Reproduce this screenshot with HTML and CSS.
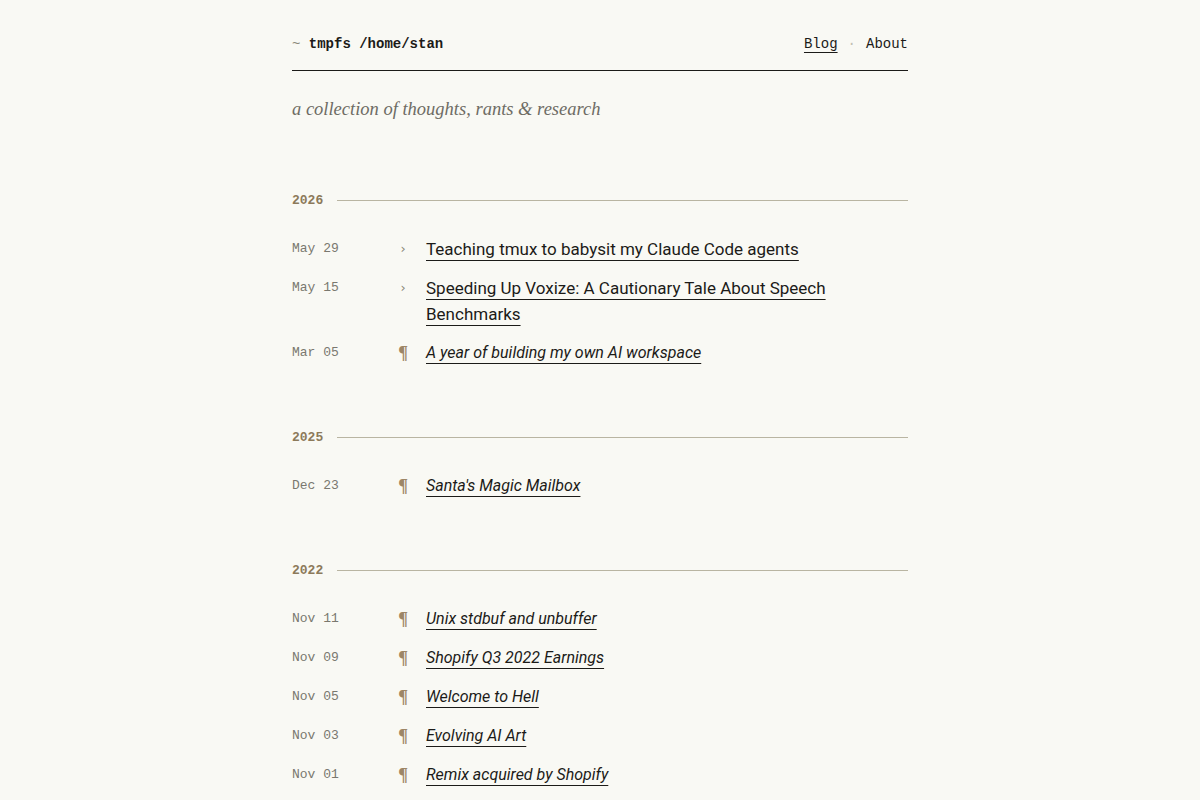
FILE: index.html
```html
<!DOCTYPE html>
<html lang="en">
<head>
    <meta charset="UTF-8">
    <meta name="viewport" content="width=device-width, initial-scale=1.0">
    <title>tmpfs /home/stan</title>
    <link rel="stylesheet" href="styles.css">
</head>
<body>
    <div class="page">
        <!-- header -->
        <header class="site-header">
            <a class="site-title" href="#"><span class="tilde">~</span> tmpfs /home/stan</a>
            <nav class="site-nav">
                <a href="#" class="current">Blog</a>
                <span class="sep">·</span>
                <a href="#">About</a>
            </nav>
        </header>

        <p class="tagline">a collection of thoughts, rants &amp; research</p>

        <!-- 2026 -->
        <section class="year">
            <h2 class="year-label"><span>2026</span></h2>
            <ul class="posts">
                <li class="post">
                    <span class="date">May 29</span>
                    <span class="mark ext">›</span>
                    <a class="title" href="#">Teaching tmux to babysit my Claude Code agents</a>
                </li>
                <li class="post">
                    <span class="date">May 15</span>
                    <span class="mark ext">›</span>
                    <a class="title" href="#">Speeding Up Voxize: A Cautionary Tale About Speech Benchmarks</a>
                </li>
                <li class="post">
                    <span class="date">Mar 05</span>
                    <span class="mark">¶</span>
                    <a class="title note" href="#">A year of building my own AI workspace</a>
                </li>
            </ul>
        </section>

        <!-- 2025 -->
        <section class="year">
            <h2 class="year-label"><span>2025</span></h2>
            <ul class="posts">
                <li class="post">
                    <span class="date">Dec 23</span>
                    <span class="mark">¶</span>
                    <a class="title note" href="#">Santa's Magic Mailbox</a>
                </li>
            </ul>
        </section>

        <!-- 2022 -->
        <section class="year">
            <h2 class="year-label"><span>2022</span></h2>
            <ul class="posts">
                <li class="post">
                    <span class="date">Nov 11</span>
                    <span class="mark">¶</span>
                    <a class="title note" href="#">Unix stdbuf and unbuffer</a>
                </li>
                <li class="post">
                    <span class="date">Nov 09</span>
                    <span class="mark">¶</span>
                    <a class="title note" href="#">Shopify Q3 2022 Earnings</a>
                </li>
                <li class="post">
                    <span class="date">Nov 05</span>
                    <span class="mark">¶</span>
                    <a class="title note" href="#">Welcome to Hell</a>
                </li>
                <li class="post">
                    <span class="date">Nov 03</span>
                    <span class="mark">¶</span>
                    <a class="title note" href="#">Evolving AI Art</a>
                </li>
                <li class="post">
                    <span class="date">Nov 01</span>
                    <span class="mark">¶</span>
                    <a class="title note" href="#">Remix acquired by Shopify</a>
                </li>
            </ul>
        </section>
    </div>
</body>
</html>
```

FILE: styles.css
```css
/* general */
body {
    margin: 0;
    background: #f9f9f4;
    color: #1c1b18;
    font-family: 'Roboto', sans-serif;
}

a {
    color: inherit;
}

.page {
    width: 616px;
    margin: 0 auto;
    padding-bottom: 40px;
}

/* header */
.site-header {
    display: flex;
    justify-content: space-between;
    align-items: center;
    padding: 34px 0 16px;
    border-bottom: 1px solid #1c1b18;
    font-family: 'Liberation Mono', monospace;
    font-size: 14px;
    line-height: 20px;
}

.site-title {
    text-decoration: none;
    font-weight: bold;
}

.tilde {
    color: #8a8778;
    font-weight: normal;
}

.site-nav {
    display: flex;
    gap: 10px;
}

.site-nav a {
    text-decoration: none;
}

.site-nav a.current {
    text-decoration: underline;
    text-underline-offset: 4px;
}

.sep {
    color: #c2bfb1;
}

.tagline {
    margin: 28px 0 0;
    font-family: 'Liberation Serif', serif;
    font-style: italic;
    font-size: 18.5px;
    color: #6e6c64;
}

/* years */
.year {
    margin-top: 73px;
}

.year + .year {
    margin-top: 64px;
}

.year-label {
    display: flex;
    align-items: center;
    gap: 14px;
    margin: 0 0 28px;
    font-family: 'Liberation Mono', monospace;
    font-size: 13px;
    font-weight: bold;
    color: #8c7a5a;
}

.year-label::after {
    content: "";
    flex: 1;
    height: 1px;
    background: #b9b5a2;
}

.posts {
    list-style: none;
    margin: 0;
    padding: 0;
    display: flex;
    flex-direction: column;
    gap: 13px;
}

.post {
    display: grid;
    grid-template-columns: 102px 18px 1fr;
    line-height: 26px;
}

.date {
    font-family: 'Liberation Mono', monospace;
    font-size: 13px;
    color: #7a786f;
}

.mark {
    text-align: center;
    font-family: 'Liberation Serif', serif;
    font-size: 18px;
    font-weight: bold;
    color: #9d8666;
}

.mark.ext {
    font-family: 'DejaVu Sans', sans-serif;
    font-size: 13px;
    font-weight: normal;
    color: #8a8778;
}

.title {
    margin-left: 14px;
    font-size: 17px;
    text-decoration: underline;
    text-decoration-thickness: 1px;
    text-underline-offset: 5px;
}

.title.note {
    font-style: italic;
    font-size: 16px;
}
```
